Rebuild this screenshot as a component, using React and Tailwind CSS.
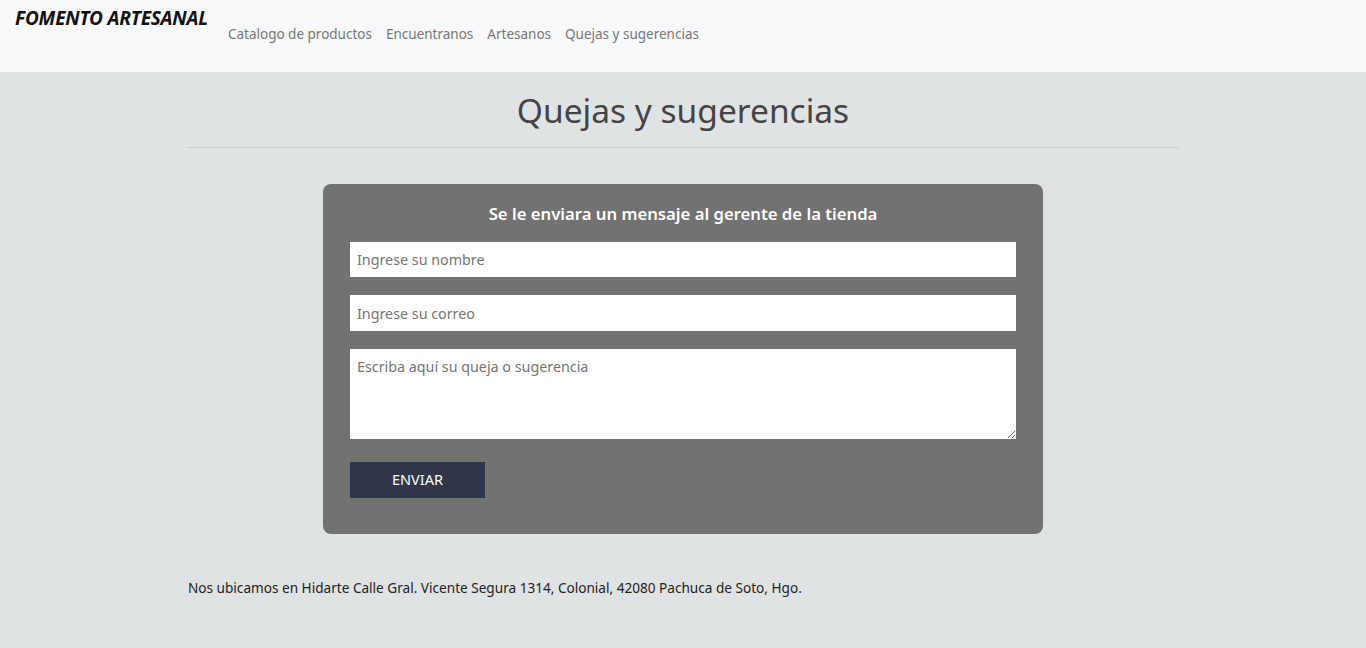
export default function App() {
  const font = { fontFamily: '"Segoe UI", "Noto Sans", "Open Sans", sans-serif' };
  return (
    <div className="min-h-[648px] bg-[#e0e3e4]" style={font}>
      <nav className="h-[72px] bg-[#f8f9fa] flex items-start">
        <div className="pl-[15px] pt-[4px] text-[19px] font-bold italic text-[#111] tracking-[-0.2px]">FOMENTO ARTESANAL</div>
        <ul className="flex pl-[20px] pt-[24px] text-[13.5px] text-[#777] gap-[14px]">
          <li>Catalogo de productos</li>
          <li>Encuentranos</li>
          <li>Artesanos</li>
          <li>Quejas y sugerencias</li>
        </ul>
      </nav>
      <main className="w-[990px] mx-auto">
        <h1 className="text-center text-[33.5px] leading-[1.2] text-[#444] pt-[18px] pb-[17px] font-normal">Quejas y sugerencias</h1>
        <hr className="border-t border-[#c8cbcc]" />
        <div className="w-[720px] mx-auto mt-[36px] bg-[#717271] rounded-[8px] px-[27px] pt-[18px] pb-[36px]">
          <h2 className="text-center text-white font-semibold text-[16.7px] leading-[24px]">Se le enviara un mensaje al gerente de la tienda</h2>
          <div className="mt-[16px] flex flex-col gap-[18px]">
            <input className="h-[35px] bg-white px-[7px] text-[14.3px] text-[#333] placeholder:text-[#757575] outline-none" placeholder="Ingrese su nombre" />
            <input className="h-[36px] bg-white px-[7px] text-[14.3px] text-[#333] placeholder:text-[#757575] outline-none" placeholder="Ingrese su correo" />
            <textarea className="h-[90px] bg-white px-[7px] pt-[7px] text-[14.3px] text-[#333] placeholder:text-[#757575] outline-none resize-y" placeholder="Escriba aquí su queja o sugerencia" />
          </div>
          <button className="mt-[23px] w-[135px] h-[36px] bg-[#30364a] text-white text-[14.5px]">ENVIAR</button>
        </div>
        <p className="mt-[44px] text-[13.6px] text-[#222]">Nos ubicamos en Hidarte Calle Gral. Vicente Segura 1314, Colonial, 42080 Pachuca de Soto, Hgo.</p>
      </main>
    </div>
  );
}
